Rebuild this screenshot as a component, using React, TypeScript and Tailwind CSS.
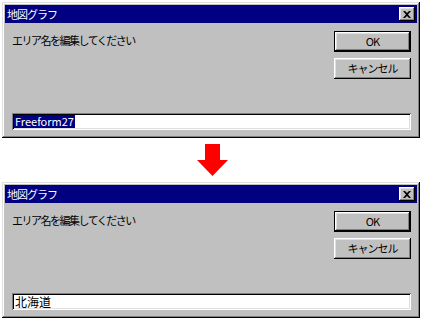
import React from "react";

const font = { fontFamily: '"Noto Sans CJK JP", "Noto Sans", sans-serif' };

function CloseBtn() {
  return (
    <div className="w-[16px] h-[14px] bg-[#c0c0c0] shadow-[inset_-1px_-1px_#000,inset_1px_1px_#fff,inset_-2px_-2px_#808080,inset_2px_2px_#dfdfdf] flex items-center justify-center">
      <svg width="8" height="7" viewBox="0 0 8 7">
        <path d="M0 0h2l2 2 2-2h2L5 3.5 8 7H6L4 5 2 7H0l3-3.5z" fill="#000" />
      </svg>
    </div>
  );
}

function Button({ label, def }: { label: string; def?: boolean }) {
  return (
    <div
      className={
        "w-[77px] h-[21px] bg-[#c0c0c0] flex items-center justify-center text-[11px] tracking-[-1px] text-black leading-none " +
        (def
          ? "shadow-[inset_-1px_-1px_#000,inset_1px_1px_#000,inset_-2px_-2px_#000,inset_2px_2px_#fff,inset_-3px_-3px_#808080,inset_3px_3px_#dfdfdf]"
          : "shadow-[inset_-1px_-1px_#000,inset_1px_1px_#fff,inset_-2px_-2px_#808080,inset_2px_2px_#dfdfdf]")
      }
    >
      {label}
    </div>
  );
}

function Dialog({ value, selected }: { value: string; selected?: boolean }) {
  return (
    <div className="ml-[2px] w-[418px] h-[136px] bg-[#c0c0c0] p-[3px] flex flex-col shadow-[inset_-1px_-1px_#000,inset_1px_1px_#dfdfdf,inset_-2px_-2px_#808080,inset_2px_2px_#fff]">
      <div className="h-[18px] bg-[#000080] flex items-center justify-between pl-[2px] pr-[2px]">
        <span className="text-white text-[11px] tracking-[-1px] leading-none">地図グラフ</span>
        <CloseBtn />
      </div>
      <div className="flex-1 flex flex-col pl-[7px] pr-[6px] pb-[5px]">
        <div className="flex justify-between pt-[8px]">
          <div className="text-[11px] tracking-[-1.5px] text-black leading-none pt-[4px]">エリア名を編集してください</div>
          <div className="flex flex-col gap-[6px]">
            <Button label="OK" def />
            <Button label="キャンセル" />
          </div>
        </div>
        <div className="flex-1" />
        <div className="h-[17px] bg-white flex items-center pl-[2px] shadow-[inset_1px_1px_#808080,inset_-1px_-1px_#fff,inset_2px_2px_#000,inset_-2px_-2px_#dfdfdf]">
          <span
            className={
              "leading-[13px] px-[1px] " +
              (selected ? "bg-[#000080] text-white text-[11px]" : "text-black text-[12px]")
            }
          >
            {value}
          </span>
        </div>
      </div>
    </div>
  );
}

export default function App() {
  return (
    <div className="w-[424px] h-[322px] bg-white pt-[2px] flex flex-col" style={font}>
      <Dialog value="Freeform27" selected />
      <div className="h-[44px] flex items-center justify-center pl-[2px]">
        <svg width="32" height="32" viewBox="0 0 32 32">
          <path d="M8 0h15v16h8L15.5 32 0 16h8z" fill="#ff0000" />
        </svg>
      </div>
      <Dialog value="北海道" />
    </div>
  );
}
